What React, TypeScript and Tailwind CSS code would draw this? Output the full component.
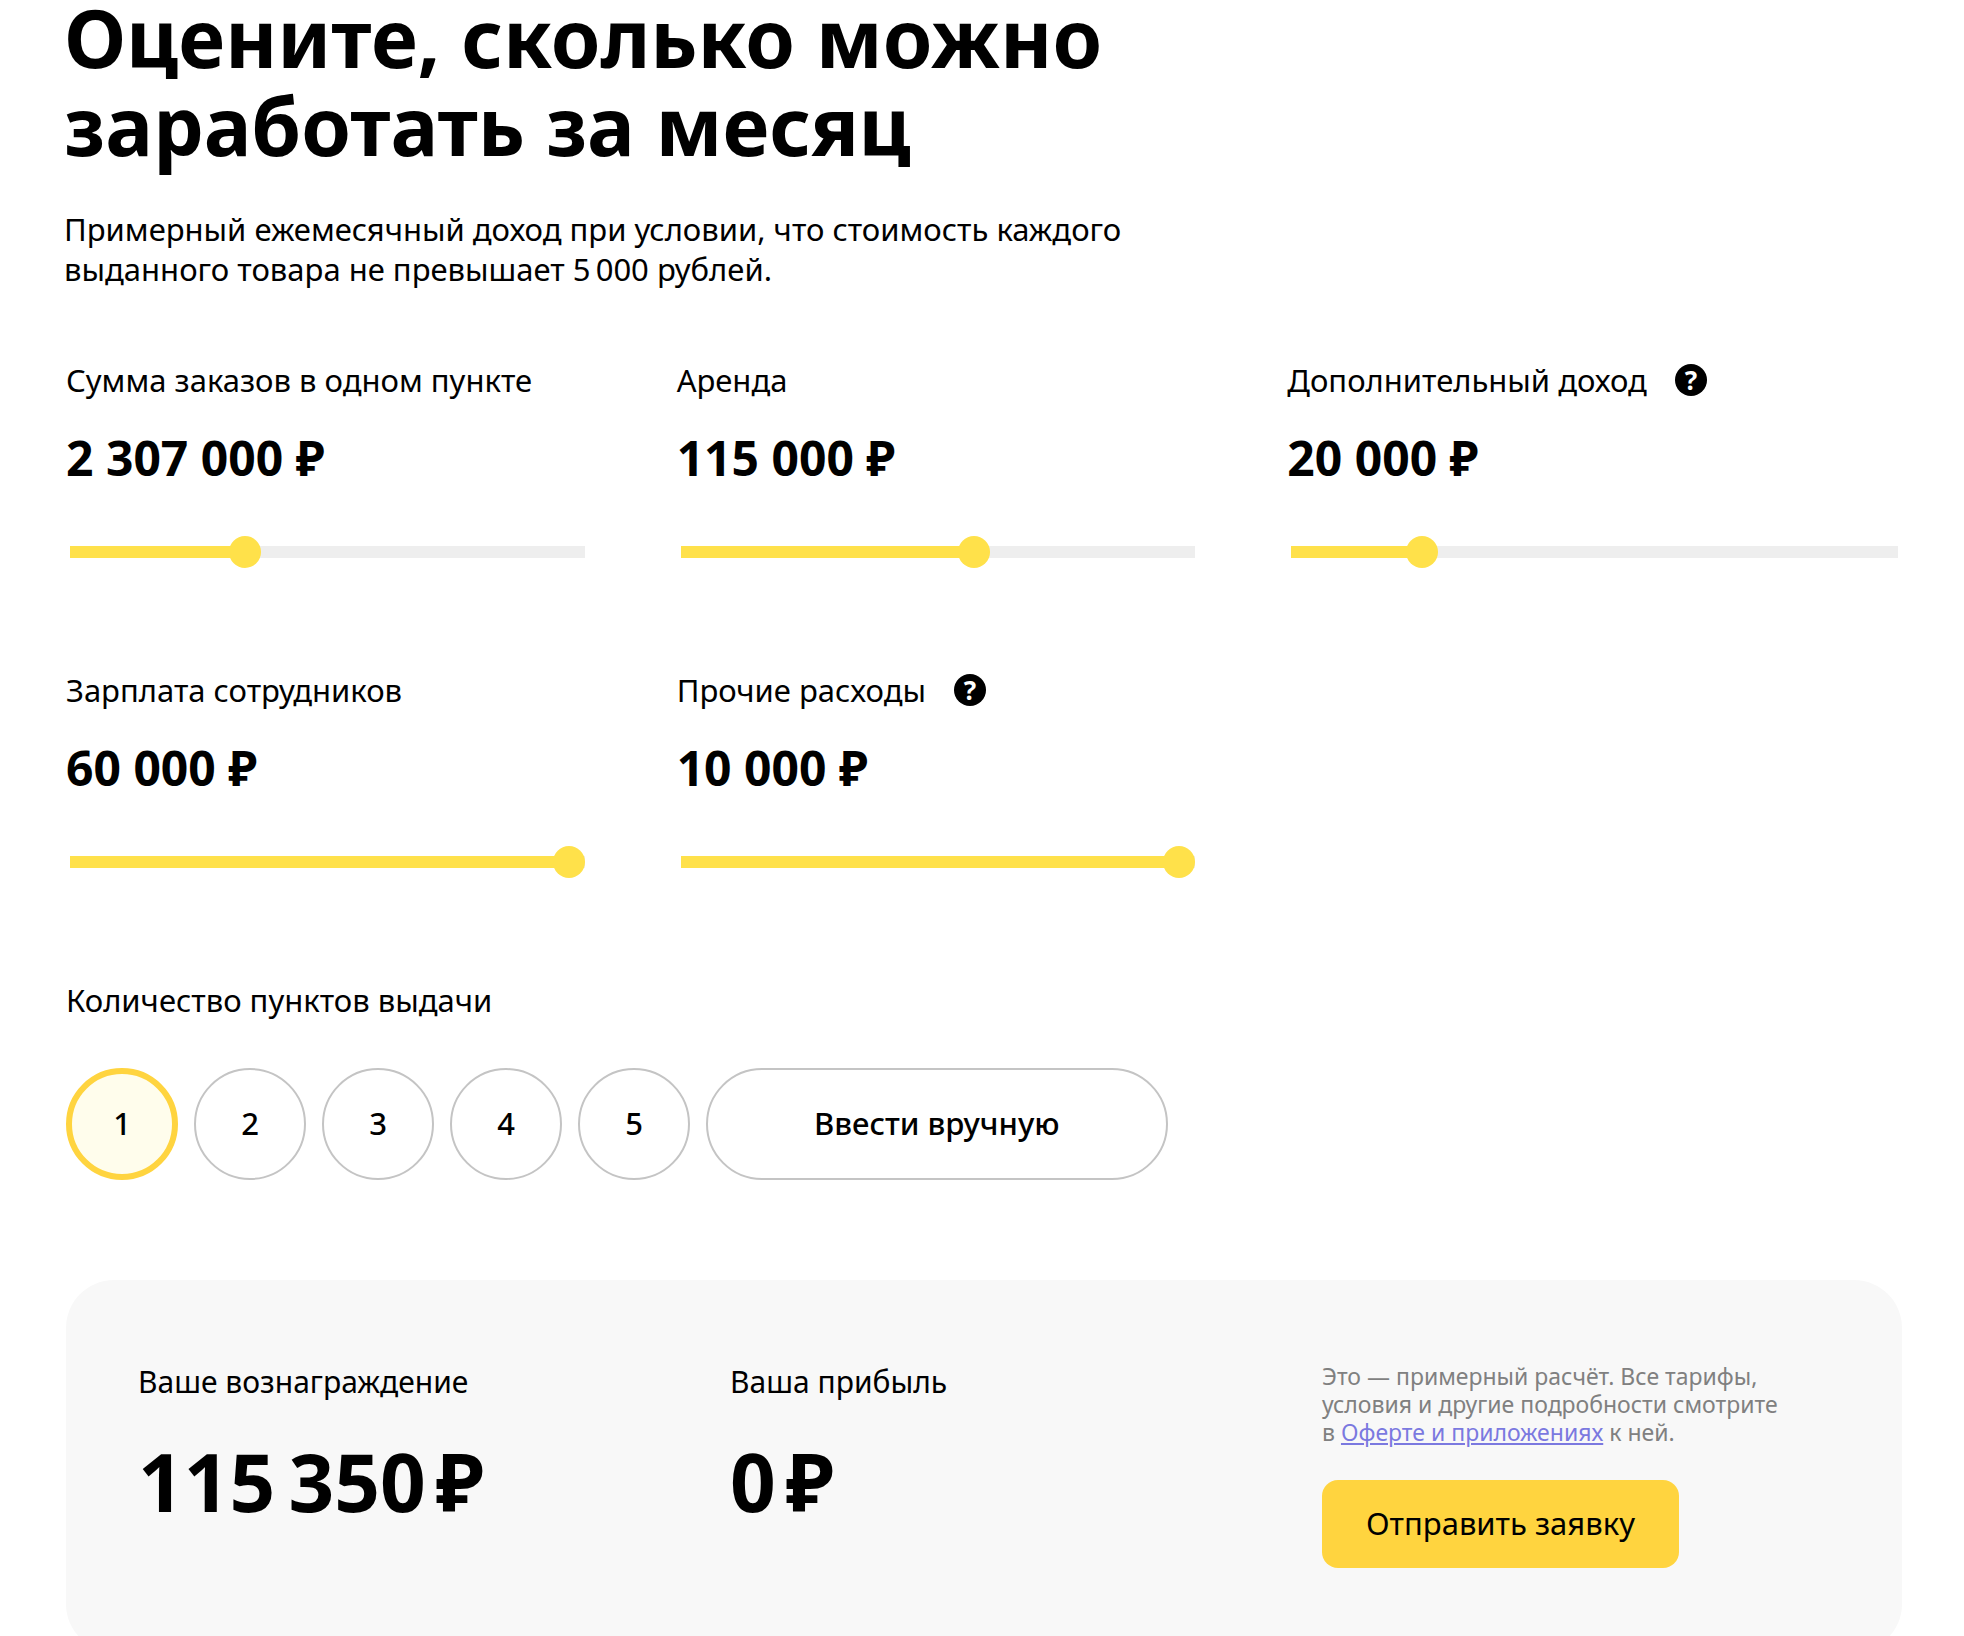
import React, { useState } from 'react';

type FieldKey = 'orders' | 'rent' | 'extra' | 'salary' | 'other';

interface Field {
  key: FieldKey;
  label: string;
  max: number;
  step: number;
  hint?: string;
  wide?: boolean;
}

const FIELDS: Field[] = [
  { key: 'orders', label: 'Сумма заказов в одном пункте', max: 7000000, step: 1000 },
  { key: 'rent', label: 'Аренда', max: 200000, step: 1000 },
  { key: 'extra', label: 'Дополнительный доход', max: 100000, step: 1000, hint: 'Подробнее о дополнительном доходе', wide: true },
  { key: 'salary', label: 'Зарплата сотрудников', max: 60000, step: 1000 },
  { key: 'other', label: 'Прочие расходы', max: 10000, step: 500, hint: 'Подробнее о прочих расходах' },
];

const POINTS = [1, 2, 3, 4, 5];

const REWARD_RATE = 0.05;

// 2307000 -> "2 307 000", non-breaking space by default
const formatNumber = (value: number, separator = '\u00a0') =>
  String(Math.round(value)).replace(/\B(?=(\d{3})+(?!\d))/g, separator);

interface SliderFieldProps {
  field: Field;
  value: number;
  onChange: (value: number) => void;
}

const SliderField: React.FC<SliderFieldProps> = ({ field, value, onChange }) => {
  const share = value / field.max;
  const fill = `calc(16px + (100% - 32px) * ${share})`;

  return (
    <div className={field.wide ? '' : 'lg:pr-[92px]'}>
      <div className="flex items-center gap-7">
        <label htmlFor={field.key} className="text-[31px] leading-10">
          {field.label}
        </label>
        {field.hint && (
          <button
            type="button"
            aria-label={field.hint}
            className="flex size-8 shrink-0 items-center justify-center rounded-full bg-black text-[26px] leading-8 font-bold text-white"
          >
            ?
          </button>
        )}
      </div>
      <output htmlFor={field.key} className="mt-7 block text-5xl leading-[60px] font-bold">
        {formatNumber(value)} ₽
      </output>
      <div className="mt-12 pl-1">
        <input
          id={field.key}
          type="range"
          min={0}
          max={field.max}
          step={field.step}
          value={value}
          onChange={(e) => onChange(Number(e.target.value))}
          style={{ '--fill': fill } as React.CSSProperties}
          className="block h-8 w-full cursor-pointer appearance-none bg-transparent [&::-webkit-slider-runnable-track]:h-3 [&::-webkit-slider-runnable-track]:bg-[linear-gradient(to_right,#ffe14a_var(--fill),#eeeeee_var(--fill))] [&::-webkit-slider-thumb]:-mt-2.5 [&::-webkit-slider-thumb]:size-8 [&::-webkit-slider-thumb]:appearance-none [&::-webkit-slider-thumb]:rounded-full [&::-webkit-slider-thumb]:bg-[#ffe14a]"
        />
      </div>
    </div>
  );
};

const Total: React.FC<{ title: string; value: number }> = ({ title, value }) => (
  <div>
    <h3 className="text-[30px] leading-10">{title}</h3>
    <p className="mt-[35px] text-[80px] leading-[88px] font-bold whitespace-nowrap">
      {formatNumber(value, '\u2009')}
      <span className="ml-2.5">₽</span>
    </p>
  </div>
);

export default function App() {
  const [values, setValues] = useState<Record<FieldKey, number>>({
    orders: 2307000,
    rent: 115000,
    extra: 20000,
    salary: 60000,
    other: 10000,
  });
  const [points, setPoints] = useState(1);

  const reward = values.orders * REWARD_RATE * points;
  const expenses = (values.rent + values.salary + values.other) * points;
  const profit = Math.max(0, reward + values.extra * points - expenses);

  return (
    <main className="bg-white pr-[62px] pl-16 font-['Noto_Sans',sans-serif] text-black">
      {/* Heading */}
      <h1 className="-mt-[7px] max-w-[1100px] text-[80px] leading-[88px] font-bold">
        Оцените, сколько можно заработать за месяц
      </h1>
      <p className="mt-10 max-w-[1100px] text-[31px] leading-10">
        Примерный ежемесячный доход при условии, что стоимость каждого выданного товара не превышает
        5&#8201;000 рублей.
      </p>

      <div className="pl-0.5">
        {/* Sliders */}
        <div className="mt-[71px] grid grid-cols-1 gap-y-[102px] pr-1 lg:grid-cols-3">
          {FIELDS.map((field) => (
            <SliderField
              key={field.key}
              field={field}
              value={values[field.key]}
              onChange={(value) => setValues({ ...values, [field.key]: value })}
            />
          ))}
        </div>

        {/* Number of pick-up points */}
        <h2 id="points" className="mt-[102px] text-[31px] leading-10">
          Количество пунктов выдачи
        </h2>
        <div role="group" aria-labelledby="points" className="mt-12 flex flex-wrap gap-4">
          {POINTS.map((n) => (
            <button
              key={n}
              type="button"
              aria-pressed={points === n}
              onClick={() => setPoints(n)}
              className={`size-28 rounded-full pb-0.5 text-[31px] font-medium ${
                points === n ? 'border-6 border-[#ffd43f] bg-[#fffdec]' : 'border-2 border-[#c4c4c4]'
              }`}
            >
              {n}
            </button>
          ))}
          <button
            type="button"
            className="h-28 rounded-full border-2 border-[#c4c4c4] px-[106px] pb-0.5 text-[31px] font-medium"
          >
            Ввести вручную
          </button>
        </div>

        {/* Result */}
        <section className="mt-[100px] grid grid-cols-1 items-start gap-[84px] rounded-[48px] bg-[#f8f8f8] px-[72px] pt-[82px] pb-[84px] lg:grid-cols-3">
          <Total title="Ваше вознаграждение" value={reward} />
          <Total title="Ваша прибыль" value={profit} />
          <div>
            <p className="max-w-[470px] text-[23px] leading-7 text-[#808080]">
              Это — примерный расчёт. Все тарифы, условия и другие подробности смотрите в&nbsp;
              <a href="#offer" className="text-[#7b79e0] underline">
                Оферте и приложениях
              </a>{' '}
              к ней.
            </p>
            <button
              type="button"
              className="mt-[34px] h-[88px] rounded-2xl bg-[#ffd43f] px-11 pb-0.5 text-[31px] whitespace-nowrap"
            >
              Отправить заявку
            </button>
          </div>
        </section>
      </div>
    </main>
  );
}
